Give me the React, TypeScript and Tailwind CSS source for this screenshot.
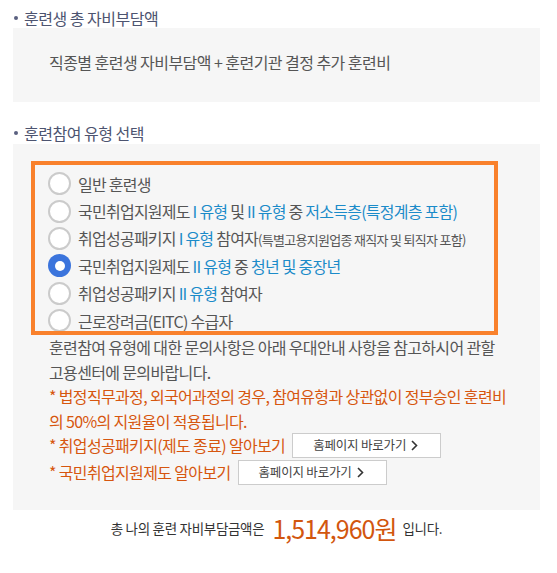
import * as React from 'react';

const FONT = { fontFamily: '"Noto Sans CJK KR", "Noto Sans", sans-serif' };

const OPTIONS: { label: React.ReactNode }[] = [
    { label: <>일반 훈련생</> },
    {
        label: (
            <>
                국민취업지원제도 <b className="font-normal text-[#1b8bc9]">I 유형</b> 및{' '}
                <b className="font-normal text-[#1b8bc9]">II 유형</b> 중{' '}
                <b className="font-normal text-[#1b8bc9]">저소득층(특정계층 포함)</b>
            </>
        ),
    },
    {
        label: (
            <>
                취업성공패키지 <b className="font-normal text-[#1b8bc9]">I 유형</b> 참여자
                <span className="text-[13px] tracking-[-0.7px]">(특별고용지원업종 재직자 및 퇴직자 포함)</span>
            </>
        ),
    },
    {
        label: (
            <>
                국민취업지원제도 <b className="font-normal text-[#1b8bc9]">II 유형</b> 중{' '}
                <b className="font-normal text-[#1b8bc9]">청년 및 중장년</b>
            </>
        ),
    },
    {
        label: (
            <>
                취업성공패키지 <b className="font-normal text-[#1b8bc9]">II 유형</b> 참여자
            </>
        ),
    },
    { label: <>근로장려금(EITC) 수급자</> },
];

function Title({ children }: { children: React.ReactNode }) {
    return (
        <div className="flex items-center h-5 text-[16px] leading-5 text-[#4d5470] tracking-[-0.5px]">
            <span className="w-[4px] h-[4px] rounded-full bg-[#5a6080] mr-[6px] ml-[1px]" />
            {children}
        </div>
    );
}

function Radio({ checked }: { checked: boolean }) {
    if (checked) {
        return (
            <span className="shrink-0 w-[23px] h-[23px] rounded-full bg-[#3b74dc] flex items-center justify-center">
                <span className="w-[10px] h-[10px] rounded-full bg-white" />
            </span>
        );
    }
    return <span className="shrink-0 w-[23px] h-[23px] rounded-full border-[2.5px] border-[#cbcbcb] bg-white" />;
}

function LinkButton() {
    return (
        <button className="ml-[7px] h-[25px] pl-[20px] pr-[22px] flex items-center gap-[5px] border border-[#cccccc] bg-white text-[12.5px] text-[#444] tracking-[-0.2px]">
            홈페이지 바로가기
            <svg width="7" height="11" viewBox="0 0 7 11" fill="none">
                <polyline points="1,1 5.5,5.5 1,10" stroke="#333" strokeWidth="1.6" />
            </svg>
        </button>
    );
}

export default function App() {
    const [selected, setSelected] = React.useState(3);

    return (
        <div className="w-[557px] h-[573px] bg-white" style={FONT}>
            <div className="ml-[13px] w-[527px] pt-2">
                <Title>훈련생 총 자비부담액</Title>

                <div className="h-[74px] bg-[#f6f6f6] pl-[36px] pt-[24px] text-[16px] leading-5 text-[#555] tracking-[-0.55px]">
                    직종별 훈련생 자비부담액 + 훈련기관 결정 추가 훈련비
                </div>

                <div className="mt-[21px] mb-[1px]">
                    <Title>훈련참여 유형 선택</Title>
                </div>

                <div className="bg-[#f6f6f6] pt-[17px] pb-[25px]">
                    {/* options */}
                    <div className="ml-[18px] w-[467px] h-[174px] border-4 border-[#f9812c] overflow-hidden pt-[5px] pl-[13px]">
                        {OPTIONS.map((o, i) => (
                            <label
                                key={i}
                                onClick={() => setSelected(i)}
                                className="flex items-center gap-[7px] h-[27.4px] text-[16px] text-[#555] tracking-[-0.75px] whitespace-nowrap cursor-pointer"
                            >
                                <Radio checked={selected === i} />
                                <span>{o.label}</span>
                            </label>
                        ))}
                    </div>

                    <div className="pl-[36px] text-[16px] leading-[24.5px] tracking-[-0.65px] whitespace-nowrap">
                        <p className="text-[#555]">훈련참여 유형에 대한 문의사항은 아래 우대안내 사항을 참고하시어 관할</p>
                        <p className="text-[#555]">고용센터에 문의바랍니다.</p>
                        <p className="text-[#d6560f]">* 법정직무과정, 외국어과정의 경우, 참여유형과 상관없이 정부승인 훈련비</p>
                        <p className="text-[#d6560f]">의 50%의 지원율이 적용됩니다.</p>
                        <div className="flex items-center h-[25px] text-[#d6560f]">
                            * 취업성공패키지(제도 종료) 알아보기
                            <LinkButton />
                        </div>
                        <div className="flex items-center h-[25px] mt-[2px] text-[#d6560f]">
                            * 국민취업지원제도 알아보기
                            <LinkButton />
                        </div>
                    </div>
                </div>

                <div className="h-[36px] flex items-center justify-center text-[13.5px] text-[#333] tracking-[-0.3px]">
                    총 나의 훈련 자비부담금액은
                    <span className="ml-[8px] mr-[6px] text-[25px] leading-none text-[#d2560e] tracking-[-1px]">1,514,960원</span>
                    입니다.
                </div>
            </div>
        </div>
    );
}
